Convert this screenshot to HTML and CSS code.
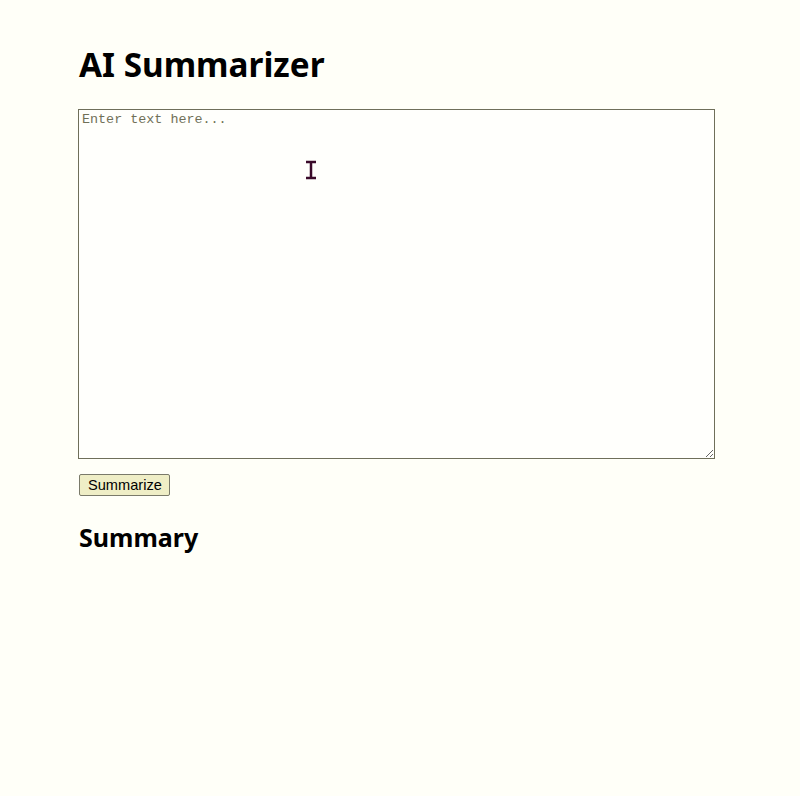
FILE: index.html
```html
<!DOCTYPE html>
<html lang="en">
<head>
<meta charset="utf-8">
<title>AI Summarizer</title>
<link rel="stylesheet" href="styles.css">
</head>
<body>
<main class="container">
  <h1 class="title">AI Summarizer</h1>
  <textarea class="input" placeholder="Enter text here..."></textarea>
  <div class="actions">
    <button class="btn" type="button">Summarize</button>
  </div>
  <h2 class="subtitle">Summary</h2>
  <div class="summary"></div>
</main>
<svg class="cursor" width="12" height="20" viewBox="0 0 12 20" aria-hidden="true">
  <path d="M1 2h10M6 2v16M1 18h10" stroke="#3a0a2a" stroke-width="2.5" fill="none"/>
</svg>
</body>
</html>
```
FILE: styles.css
```css
html, body {
  margin: 0;
  padding: 0;
  background: #fffff8;
}
body {
  font-family: "Noto Sans", "Open Sans", sans-serif;
  color: #000;
  position: relative;
  min-height: 796px;
}
.container {
  margin-left: 78px;
  width: 637px;
  padding-top: 40px;
  display: flex;
  flex-direction: column;
}
.title {
  font-size: 33.3px;
  font-weight: 700;
  line-height: 48px;
  margin: 0 0 21px 1px;
}
.input {
  box-sizing: border-box;
  width: 637px;
  height: 350px;
  border: 1px solid #6f6f5a;
  background: #fffffc;
  font-family: "Liberation Mono", monospace;
  font-size: 13.4px;
  padding: 2px 3px;
  resize: vertical;
  margin: 0;
}
.input::placeholder {
  color: #707058;
}
.actions {
  display: flex;
  margin-top: 15px;
  margin-left: 1px;
}
.btn {
  font-family: "Liberation Sans", Arial, sans-serif;
  font-size: 14.6px;
  line-height: 16px;
  padding: 2px 7px 2px 8px;
  height: 22px;
  border: 1px solid #7a7a6a;
  border-radius: 2px;
  background: #efeec6;
  color: #000;
}
.subtitle {
  font-size: 25px;
  font-weight: 700;
  line-height: 32px;
  margin: 25px 0 0 1px;
}
.cursor {
  position: absolute;
  left: 305px;
  top: 160px;
}
```
